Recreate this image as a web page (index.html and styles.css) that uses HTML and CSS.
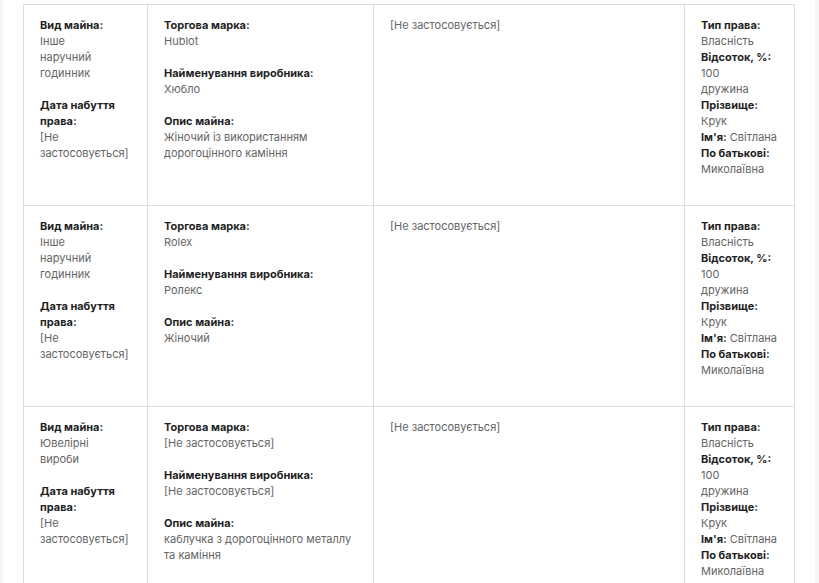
FILE: index.html
```html
<!DOCTYPE html>
<html lang="uk">
<head>
<meta charset="utf-8">
<link rel="stylesheet" href="styles.css">
</head>
<body>
<div class="page">
  <div class="panel">
    <table class="grid">
      <colgroup>
        <col class="c1"><col class="c2"><col class="c3"><col class="c4">
      </colgroup>
      <tr>
        <td class="kind">
          <div class="field"><div class="lbl">Вид майна:</div><div class="val">Інше наручний годинник</div></div>
          <div class="field"><div class="lbl">Дата набуття права:</div><div class="val">[Не застосовується]</div></div>
        </td>
        <td>
          <div class="field"><div class="lbl">Торгова марка:</div><div class="val">Hublot</div></div>
          <div class="field"><div class="lbl">Найменування виробника:</div><div class="val">Хюбло</div></div>
          <div class="field"><div class="lbl">Опис майна:</div><div class="val">Жіночий із використанням дорогоцінного каміння</div></div>
        </td>
        <td><div class="val">[Не застосовується]</div></td>
        <td class="owner">
          <div class="lbl">Тип права:</div><div class="val">Власність</div>
          <div class="lbl">Відсоток, %:</div><div class="val">100</div>
          <div class="val">дружина</div>
          <div class="lbl">Прізвище:</div><div class="val">Крук</div>
          <div><span class="lbl">Ім'я:</span> <span class="val">Світлана</span></div>
          <div class="lbl">По батькові:</div><div class="val">Миколаївна</div>
        </td>
      </tr>
      <tr>
        <td class="kind">
          <div class="field"><div class="lbl">Вид майна:</div><div class="val">Інше наручний годинник</div></div>
          <div class="field"><div class="lbl">Дата набуття права:</div><div class="val">[Не застосовується]</div></div>
        </td>
        <td>
          <div class="field"><div class="lbl">Торгова марка:</div><div class="val">Rolex</div></div>
          <div class="field"><div class="lbl">Найменування виробника:</div><div class="val">Ролекс</div></div>
          <div class="field"><div class="lbl">Опис майна:</div><div class="val">Жіночий</div></div>
        </td>
        <td><div class="val">[Не застосовується]</div></td>
        <td class="owner">
          <div class="lbl">Тип права:</div><div class="val">Власність</div>
          <div class="lbl">Відсоток, %:</div><div class="val">100</div>
          <div class="val">дружина</div>
          <div class="lbl">Прізвище:</div><div class="val">Крук</div>
          <div><span class="lbl">Ім'я:</span> <span class="val">Світлана</span></div>
          <div class="lbl">По батькові:</div><div class="val">Миколаївна</div>
        </td>
      </tr>
      <tr>
        <td class="kind">
          <div class="field"><div class="lbl">Вид майна:</div><div class="val">Ювелірні вироби</div></div>
          <div class="field"><div class="lbl">Дата набуття права:</div><div class="val">[Не застосовується]</div></div>
        </td>
        <td>
          <div class="field"><div class="lbl">Торгова марка:</div><div class="val">[Не застосовується]</div></div>
          <div class="field"><div class="lbl">Найменування виробника:</div><div class="val">[Не застосовується]</div></div>
          <div class="field"><div class="lbl">Опис майна:</div><div class="val">каблучка з дорогоцінного металлу та каміння</div></div>
        </td>
        <td><div class="val">[Не застосовується]</div></td>
        <td class="owner">
          <div class="lbl">Тип права:</div><div class="val">Власність</div>
          <div class="lbl">Відсоток, %:</div><div class="val">100</div>
          <div class="val">дружина</div>
          <div class="lbl">Прізвище:</div><div class="val">Крук</div>
          <div><span class="lbl">Ім'я:</span> <span class="val">Світлана</span></div>
          <div class="lbl">По батькові:</div><div class="val">Миколаївна</div>
        </td>
      </tr>
    </table>
  </div>
</div>
</body>
</html>
```

FILE: styles.css
```css
html, body {
  margin: 0;
  padding: 0;
  background: #f4f5f7;
  height: 100%;
  overflow: hidden;
}
.page {
  padding-left: 3px;
  padding-right: 4px;
}
.panel {
  background: #ffffff;
  padding: 4px 20px 0 20px;
  min-height: 583px;
  box-sizing: border-box;
}
.grid {
  border-collapse: collapse;
  width: 771px;
  table-layout: fixed;
  font-family: Inter, "Noto Sans", sans-serif;
  font-size: 11px;
  line-height: 16px;
}
col.c1 { width: 124px; }
col.c2 { width: 226px; }
col.c3 { width: 311px; }
col.c4 { width: 110px; }
.grid td {
  border: 1px solid #dddddd;
  vertical-align: top;
  padding: 12px 16px 28px 16px;
  height: 160px;
}
.grid td.kind {
  padding-right: 30px;
}
.field + .field { margin-top: 16px; }
.lbl {
  font-weight: 700;
  color: #1f1f1f;
}
.val {
  color: #646464;
}
```
